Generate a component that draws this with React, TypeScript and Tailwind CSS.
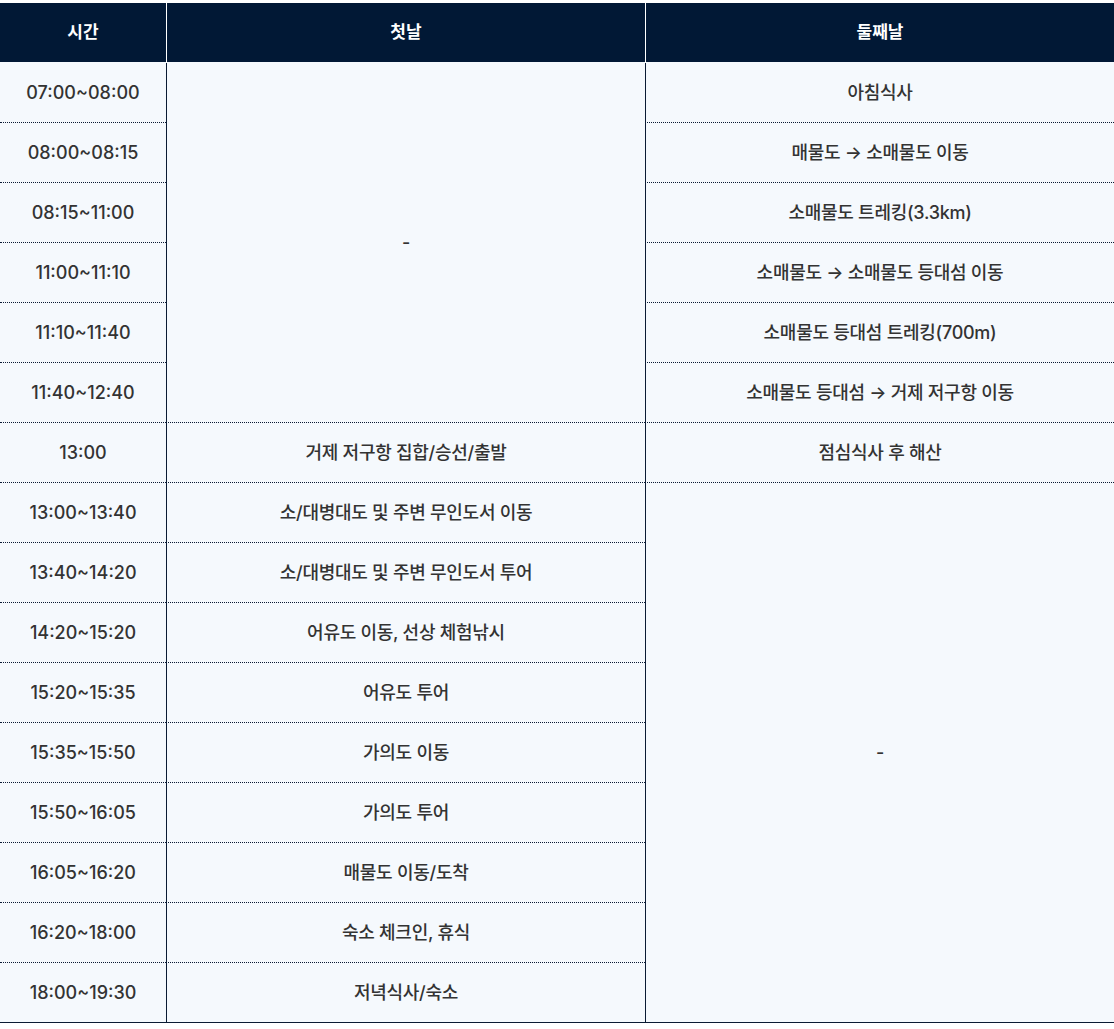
const times = [
  "07:00~08:00",
  "08:00~08:15",
  "08:15~11:00",
  "11:00~11:10",
  "11:10~11:40",
  "11:40~12:40",
  "13:00",
  "13:00~13:40",
  "13:40~14:20",
  "14:20~15:20",
  "15:20~15:35",
  "15:35~15:50",
  "15:50~16:05",
  "16:05~16:20",
  "16:20~18:00",
  "18:00~19:30",
];

// first day: rows 7..16
const dayOne = [
  "거제 저구항 집합/승선/출발",
  "소/대병대도 및 주변 무인도서 이동",
  "소/대병대도 및 주변 무인도서 투어",
  "어유도 이동, 선상 체험낚시",
  "어유도 투어",
  "가의도 이동",
  "가의도 투어",
  "매물도 이동/도착",
  "숙소 체크인, 휴식",
  "저녁식사/숙소",
];

// second day: rows 1..7
const dayTwo = [
  "아침식사",
  "매물도 → 소매물도 이동",
  "소매물도 트레킹(3.3km)",
  "소매물도 → 소매물도 등대섬 이동",
  "소매물도 등대섬 트레킹(700m)",
  "소매물도 등대섬 → 거제 저구항 이동",
  "점심식사 후 해산",
];

const cell =
  "flex items-center justify-center font-medium text-[#333333] border-b border-dotted border-[#0a1a33]";
const textCell = `${cell} text-[18px] tracking-[-0.015em]`;

const App = () => {
  return (
    <div className="min-h-screen bg-white pt-[3px] font-['Inter','Noto_Sans_CJK_KR',sans-serif]">
      <div className="grid grid-cols-[166px_479px_1fr] auto-rows-[60px] bg-[#f5f9fd]">
        {/* Header */}
        <div className="flex h-[59px] items-center justify-center bg-[#011835] text-[17px] font-bold text-white">
          시간
        </div>
        <div className="flex h-[59px] items-center justify-center border-l border-white bg-[#011835] text-[17px] font-bold text-white">
          첫날
        </div>
        <div className="flex h-[59px] items-center justify-center border-l border-white bg-[#011835] text-[17px] font-bold text-white">
          둘째날
        </div>

        {/* Time column */}
        {times.map((t, i) => (
          <div
            key={t + i}
            className={`${cell} col-start-1 text-[18px] ${
              i === times.length - 1 ? "border-solid" : ""
            }`}
            style={{ gridRowStart: i + 2 }}
          >
            {t}
          </div>
        ))}

        {/* First day */}
        <div
          className={`${textCell} col-start-2 row-span-6 border-l`}
          style={{ gridRowStart: 2, borderLeftStyle: "solid" }}
        >
          -
        </div>
        {dayOne.map((d, i) => (
          <div
            key={d + i}
            className={`${textCell} col-start-2 border-l ${
              i === dayOne.length - 1 ? "border-solid" : ""
            }`}
            style={{ gridRowStart: i + 8, borderLeftStyle: "solid" }}
          >
            {d}
          </div>
        ))}

        {/* Second day */}
        {dayTwo.map((d, i) => (
          <div
            key={d + i}
            className={`${textCell} col-start-3 border-l`}
            style={{ gridRowStart: i + 2, borderLeftStyle: "solid" }}
          >
            {d}
          </div>
        ))}
        <div
          className={`${textCell} col-start-3 row-span-9 border-l border-solid`}
          style={{ gridRowStart: 9 }}
        >
          -
        </div>
      </div>
    </div>
  );
};

export default App;
